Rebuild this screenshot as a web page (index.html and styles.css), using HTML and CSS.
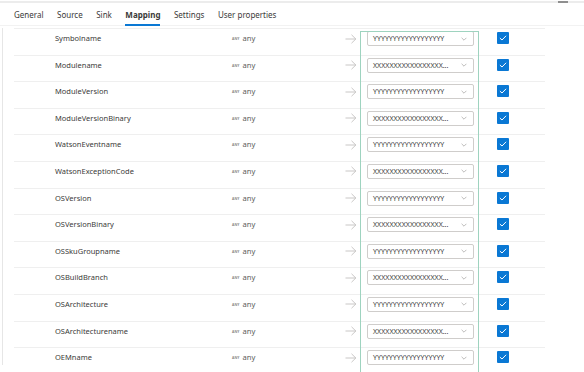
FILE: index.html
```html
<!DOCTYPE html>
<html lang="en">
<head>
<meta charset="UTF-8" />
<meta name="viewport" content="width=device-width, initial-scale=1" />
<title>Mapping</title>
<link rel="stylesheet" href="styles.css">
</head>
<body>
  <div class="barre-haut"><span class="poignee"></span></div>

  <nav class="onglets">
    <span class="onglet">General</span>
    <span class="onglet">Source</span>
    <span class="onglet">Sink</span>
    <span class="onglet actif">Mapping</span>
    <span class="onglet">Settings</span>
    <span class="onglet">User properties</span>
  </nav>

  <div class="zone">
    <div class="bord-gauche"></div>
    <div class="table-mapping" id="table-mapping">
      <div class="cadre-vert"></div>
    </div>
  </div>

<script>
  // Colonnes à mapper
  const colonnes = [
    'Symbolname', 'Modulename', 'ModuleVersion', 'ModuleVersionBinary',
    'WatsonEventname', 'WatsonExceptionCode', 'OSVersion', 'OSVersionBinary',
    'OSSkuGroupname', 'OSBuildBranch', 'OSArchitecture', 'OSArchitecturename', 'OEMname'
  ];

  const table = document.getElementById('table-mapping');

  colonnes.forEach((nom, i) => {
    const valeur = i % 2 === 0 ? 'Y'.repeat(18) : 'X'.repeat(17) + '...';
    const ligne = document.createElement('div');
    ligne.className = 'ligne';
    ligne.innerHTML = `
      <span class="nom">${nom}</span>
      <span class="type"><span class="badge">ANY</span>any</span>
      <span class="fleche">
        <svg width="12" height="10" viewBox="0 0 12 10"><path d="M0.5 5h10.5M6.5 0.8L10.8 5 6.5 9.2" fill="none" stroke="#c3c1bf" stroke-width="0.9"/></svg>
      </span>
      <span class="liste">
        <span class="valeur">${valeur}</span>
        <svg class="chevron" width="6" height="4" viewBox="0 0 6 4"><path d="M0.6 0.8l2.4 2.4 2.4-2.4" fill="none" stroke="#a19f9d" stroke-width="0.7"/></svg>
      </span>
      <span class="case">
        <svg width="8" height="6" viewBox="0 0 8 6"><path d="M0.9 3.1l2.1 1.9 4.1-4.2" fill="none" stroke="#fff" stroke-width="1"/></svg>
      </span>
    `;
    table.appendChild(ligne);
  });
</script>
</body>
</html>
```

FILE: styles.css
```css
:root {
  --texte: #3b3a39;
  --texte-doux: #605e5c;
  --bleu: #0a78d4;
  --trait: #efefef;
  --police: 'Noto Sans', 'Open Sans', sans-serif;
}
body {
  margin: 0;
  background: white;
  font-family: var(--police);
  color: var(--texte);
  width: 584px;
  height: 372px;
  overflow: hidden;
}
.barre-haut {
  height: 2px;
  margin-top: 1px;
  background: #ececec;
  position: relative;
}
.poignee {
  position: absolute;
  left: 558px;
  top: 0;
  width: 10px;
  height: 2px;
  background: #8f8f8f;
}
.onglets {
  display: flex;
  gap: 13.5px;
  padding-left: 14px;
  padding-top: 2px;
  height: 23px;
  box-sizing: border-box;
  border-bottom: 1px solid #f2f2f2;
}
.onglet {
  font-size: 8px;
  line-height: 19px;
  height: 21px;
  box-sizing: border-box;
  color: var(--texte);
}
.onglet.actif {
  font-weight: 700;
  border-bottom: 2px solid var(--bleu);
}
.zone {
  display: flex;
  margin-top: 2px;
}
.bord-gauche {
  width: 1px;
  margin-left: 2px;
  height: 337px;
  background: #e6e6e6;
}
.table-mapping {
  position: relative;
  margin-left: 11px;
  width: 531px;
}
.ligne {
  display: flex;
  align-items: flex-start;
  height: 26.6px;
  box-sizing: border-box;
  border-top: 1px solid var(--trait);
  padding-top: 2px;
  padding-left: 41px;
}
.nom {
  width: 177px;
  font-size: 7.5px;
  line-height: 15px;
}
.type {
  width: 113px;
  font-size: 7.6px;
  line-height: 15px;
  color: var(--texte-doux);
  display: flex;
  align-items: center;
}
.badge {
  font-size: 3.4px;
  font-weight: 700;
  color: #8a8886;
  margin-right: 3px;
  letter-spacing: 0.1px;
}
.fleche {
  width: 22px;
  height: 15px;
  display: flex;
  align-items: center;
}
.liste {
  width: 107px;
  height: 15px;
  box-sizing: border-box;
  border: 1px solid #cfcdcb;
  border-radius: 2px;
  display: flex;
  align-items: center;
  padding: 0 6px 0 5px;
}
.valeur {
  flex: 1;
  font-size: 7px;
  color: var(--texte);
  white-space: nowrap;
}
.chevron {
  flex: none;
}
.case {
  margin-left: 23px;
  margin-top: 1px;
  width: 12px;
  height: 12px;
  border-radius: 1px;
  background: var(--bleu);
  display: flex;
  align-items: center;
  justify-content: center;
}
.cadre-vert {
  position: absolute;
  left: 346px;
  top: 3px;
  width: 119px;
  height: 344px;
  box-sizing: border-box;
  border: 1px solid #9ed3bf;
  pointer-events: none;
}
```
